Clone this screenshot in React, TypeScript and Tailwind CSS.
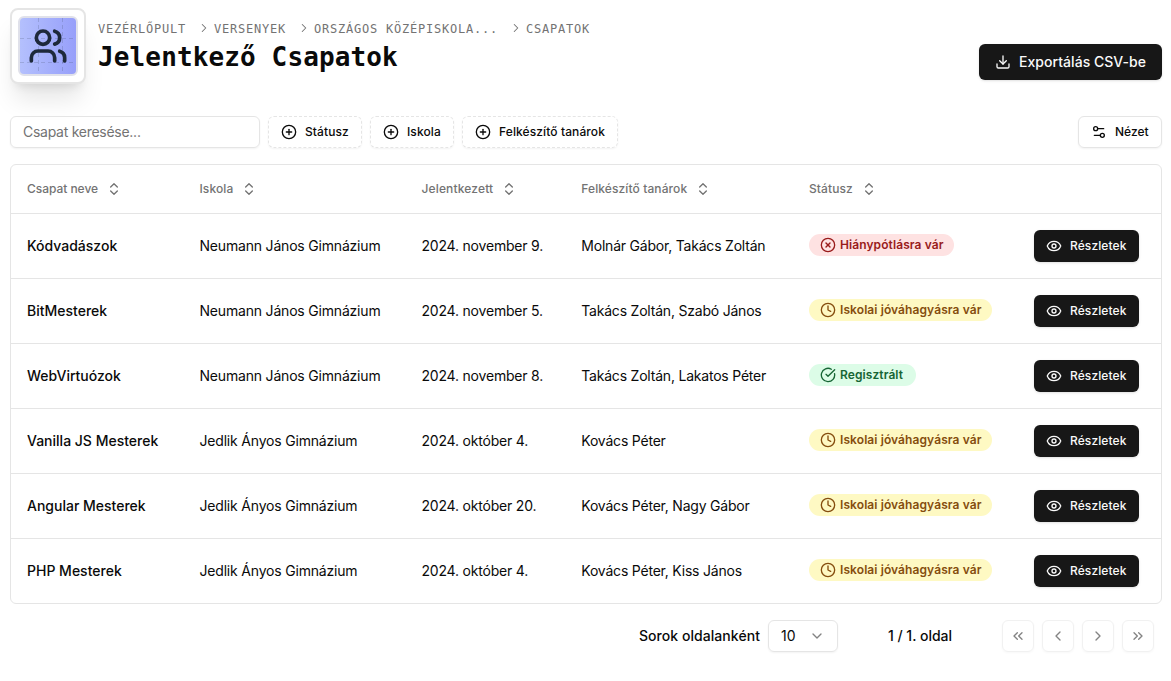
import React from "react";
import {
  ChevronDown,
  ChevronLeft,
  ChevronRight,
  ChevronsLeft,
  ChevronsRight,
  ChevronsUpDown,
  CircleCheckBig,
  CirclePlus,
  CircleX,
  Clock,
  Download,
  Eye,
  Settings2,
  Users,
} from "lucide-react";

type Status = "missing" | "pending" | "registered";

interface Team {
  name: string;
  school: string;
  date: string;
  teachers: string;
  status: Status;
}

const NEUMANN = "Neumann János Gimnázium";
const JEDLIK = "Jedlik Ányos Gimnázium";

const teams: Team[] = [
  { name: "Kódvadászok", school: NEUMANN, date: "2024. november 9.", teachers: "Molnár Gábor, Takács Zoltán", status: "missing" },
  { name: "BitMesterek", school: NEUMANN, date: "2024. november 5.", teachers: "Takács Zoltán, Szabó János", status: "pending" },
  { name: "WebVirtuózok", school: NEUMANN, date: "2024. november 8.", teachers: "Takács Zoltán, Lakatos Péter", status: "registered" },
  { name: "Vanilla JS Mesterek", school: JEDLIK, date: "2024. október 4.", teachers: "Kovács Péter", status: "pending" },
  { name: "Angular Mesterek", school: JEDLIK, date: "2024. október 20.", teachers: "Kovács Péter, Nagy Gábor", status: "pending" },
  { name: "PHP Mesterek", school: JEDLIK, date: "2024. október 4.", teachers: "Kovács Péter, Kiss János", status: "pending" },
];

const statuses = {
  missing: { label: "Hiánypótlásra vár", Icon: CircleX, style: "w-[145px] bg-[#fee2e2] text-[#991b1b]" },
  pending: { label: "Iskolai jóváhagyásra vár", Icon: Clock, style: "w-[183px] bg-[#fef9c3] text-[#854d0e]" },
  registered: { label: "Regisztrált", Icon: CircleCheckBig, style: "w-[107px] bg-[#dcfce7] text-[#166534]" },
};

const grid = "grid grid-cols-[172.5px_222px_159.8px_227.7px_225px_1fr] items-center pl-4";

function StatusBadge({ status }: { status: Status }) {
  const { label, Icon, style } = statuses[status];
  return (
    <span className={`-mt-0.5 flex h-[22px] items-center gap-1 whitespace-nowrap rounded-full pl-[11px] text-xs font-semibold tracking-[0.09px] ${style}`}>
      <Icon size={16} className="shrink-0" />
      {label}
    </span>
  );
}

function Logo() {
  return (
    <div className="size-[76px] shrink-0 rounded-lg border-2 border-[#e5e5e5] bg-white p-1.5 shadow-xl">
      <div className="relative flex size-[60px] items-center justify-center overflow-hidden rounded-md border-2 border-[#e0e1ea] bg-linear-to-r from-[#b4c0fd] to-[#979ffa]">
        <svg className="absolute inset-0" width="56" height="56" fill="none" stroke="#1e293b" strokeOpacity="0.16" strokeDasharray="4 3">
          <path d="M18.5 0v56M42.5 0v56M0 20.5h56M0 44.5h56" />
        </svg>
        <Users size={40} strokeWidth={2.2} className="relative text-[#1e293b]" />
      </div>
    </div>
  );
}

function FilterButton({ label, width }: { label: string; width: string }) {
  return (
    <button className={`flex h-8 items-center gap-2 whitespace-nowrap rounded-md border border-dashed border-[#e5e5e5] pl-3 text-xs font-medium tracking-[0.1px] shadow-xs ${width}`}>
      <CirclePlus size={16} className="shrink-0" />
      {label}
    </button>
  );
}

function HeaderCell({ label, tracking = "tracking-[0.1px]" }: { label: string; tracking?: string }) {
  return (
    <div className={`flex items-center gap-2 whitespace-nowrap ${tracking}`}>
      {label}
      <ChevronsUpDown size={16} />
    </div>
  );
}

function Crumb({ label, width }: { label: string; width: string }) {
  return (
    <>
      <span className={`pt-px ${width}`}>{label}</span>
      <ChevronRight size={14} strokeWidth={1.8} className="mr-[3px]" />
    </>
  );
}

export default function App() {
  const pages = [ChevronsLeft, ChevronLeft, ChevronRight, ChevronsRight];
  return (
    <div className="h-[681px] w-[1171px] overflow-hidden bg-white pl-[10px] pr-[9px] pt-2 font-['Inter',sans-serif] text-sm text-[#0a0a0a]">
      <header className="flex h-[76px]">
        <Logo />
        <div className="ml-3 flex-1 font-['DejaVu_Sans_Mono',monospace]">
          <nav className="mt-3 flex h-4 items-center whitespace-nowrap text-xs tracking-[0.78px] text-[#737373]">
            <Crumb label="VEZÉRLŐPULT" width="w-[99px]" />
            <Crumb label="VERSENYEK" width="w-[83px]" />
            <Crumb label="ORSZÁGOS KÖZÉPISKOLA..." width="w-[195px]" />
            <span className="pt-px">CSAPATOK</span>
          </nav>
          <h1 className="mt-[5px] whitespace-nowrap text-[26px] font-bold leading-8 tracking-[0.13px]">Jelentkező Csapatok</h1>
        </div>
        <button className="mt-9 flex h-9 w-[183px] items-center gap-2 whitespace-nowrap rounded-md bg-[#171717] pl-4 font-medium tracking-[0.04px] text-[#fafafa] shadow-sm">
          <Download size={16} className="shrink-0" />
          Exportálás CSV-be
        </button>
      </header>

      <div className="mt-8 flex h-8 items-center gap-2">
        <input
          placeholder="Csapat keresése..."
          className="h-8 w-[250px] rounded-md border border-[#e5e5e5] bg-transparent px-3 pb-0.5 tracking-[-0.27px] shadow-xs placeholder:text-[#737373]"
        />
        <FilterButton label="Státusz" width="w-[94px]" />
        <FilterButton label="Iskola" width="w-[84px]" />
        <FilterButton label="Felkészítő tanárok" width="w-[156px]" />
        <button className="ml-auto flex h-8 w-[84px] items-center gap-2 rounded-md border border-[#e5e5e5] pl-3 text-xs font-medium shadow-xs">
          <Settings2 size={16} className="shrink-0" />
          Nézet
        </button>
      </div>

      <div className="mt-4 overflow-hidden rounded-md border border-[#e5e5e5]">
        <div className={`h-12 text-xs font-medium text-[#737373] ${grid}`}>
          <HeaderCell label="Csapat neve" tracking="tracking-[-0.04px]" />
          <HeaderCell label="Iskola" />
          <HeaderCell label="Jelentkezett" tracking="tracking-[0.15px]" />
          <HeaderCell label="Felkészítő tanárok" />
          <HeaderCell label="Státusz" />
        </div>
        {teams.map((team) => (
          <div key={team.name} className={`h-[65px] whitespace-nowrap border-t border-[#e5e5e5] ${grid}`}>
            <div className="font-medium">{team.name}</div>
            <div className="tracking-[-0.19px]">{team.school}</div>
            <div className="tracking-[-0.2px]">{team.date}</div>
            <div className="tracking-[-0.21px]">{team.teachers}</div>
            <StatusBadge status={team.status} />
            <button className="flex h-8 w-[105px] items-center gap-2 rounded-md bg-[#171717] pl-3 text-xs font-medium tracking-[0.1px] text-[#fafafa] shadow-sm">
              <Eye size={16} className="shrink-0" />
              Részletek
            </button>
          </div>
        ))}
      </div>

      <footer className="mt-4 flex h-8 items-center justify-end whitespace-nowrap pr-2 font-medium">
        <span className="tracking-[0.06px]">Sorok oldalanként</span>
        <div className="ml-2 flex h-8 w-[70px] items-center justify-between rounded-md border border-[#e5e5e5] px-3 font-normal shadow-xs">
          10
          <ChevronDown size={16} className="opacity-50" />
        </div>
        <span className="ml-8 w-[100px] text-center">1 / 1. oldal</span>
        <div className="ml-8 flex gap-2">
          {pages.map((Icon, i) => (
            <button key={i} disabled className="flex size-8 items-center justify-center rounded-md border border-[#e5e5e5] opacity-50 shadow-xs">
              <Icon size={16} />
            </button>
          ))}
        </div>
      </footer>
    </div>
  );
}
